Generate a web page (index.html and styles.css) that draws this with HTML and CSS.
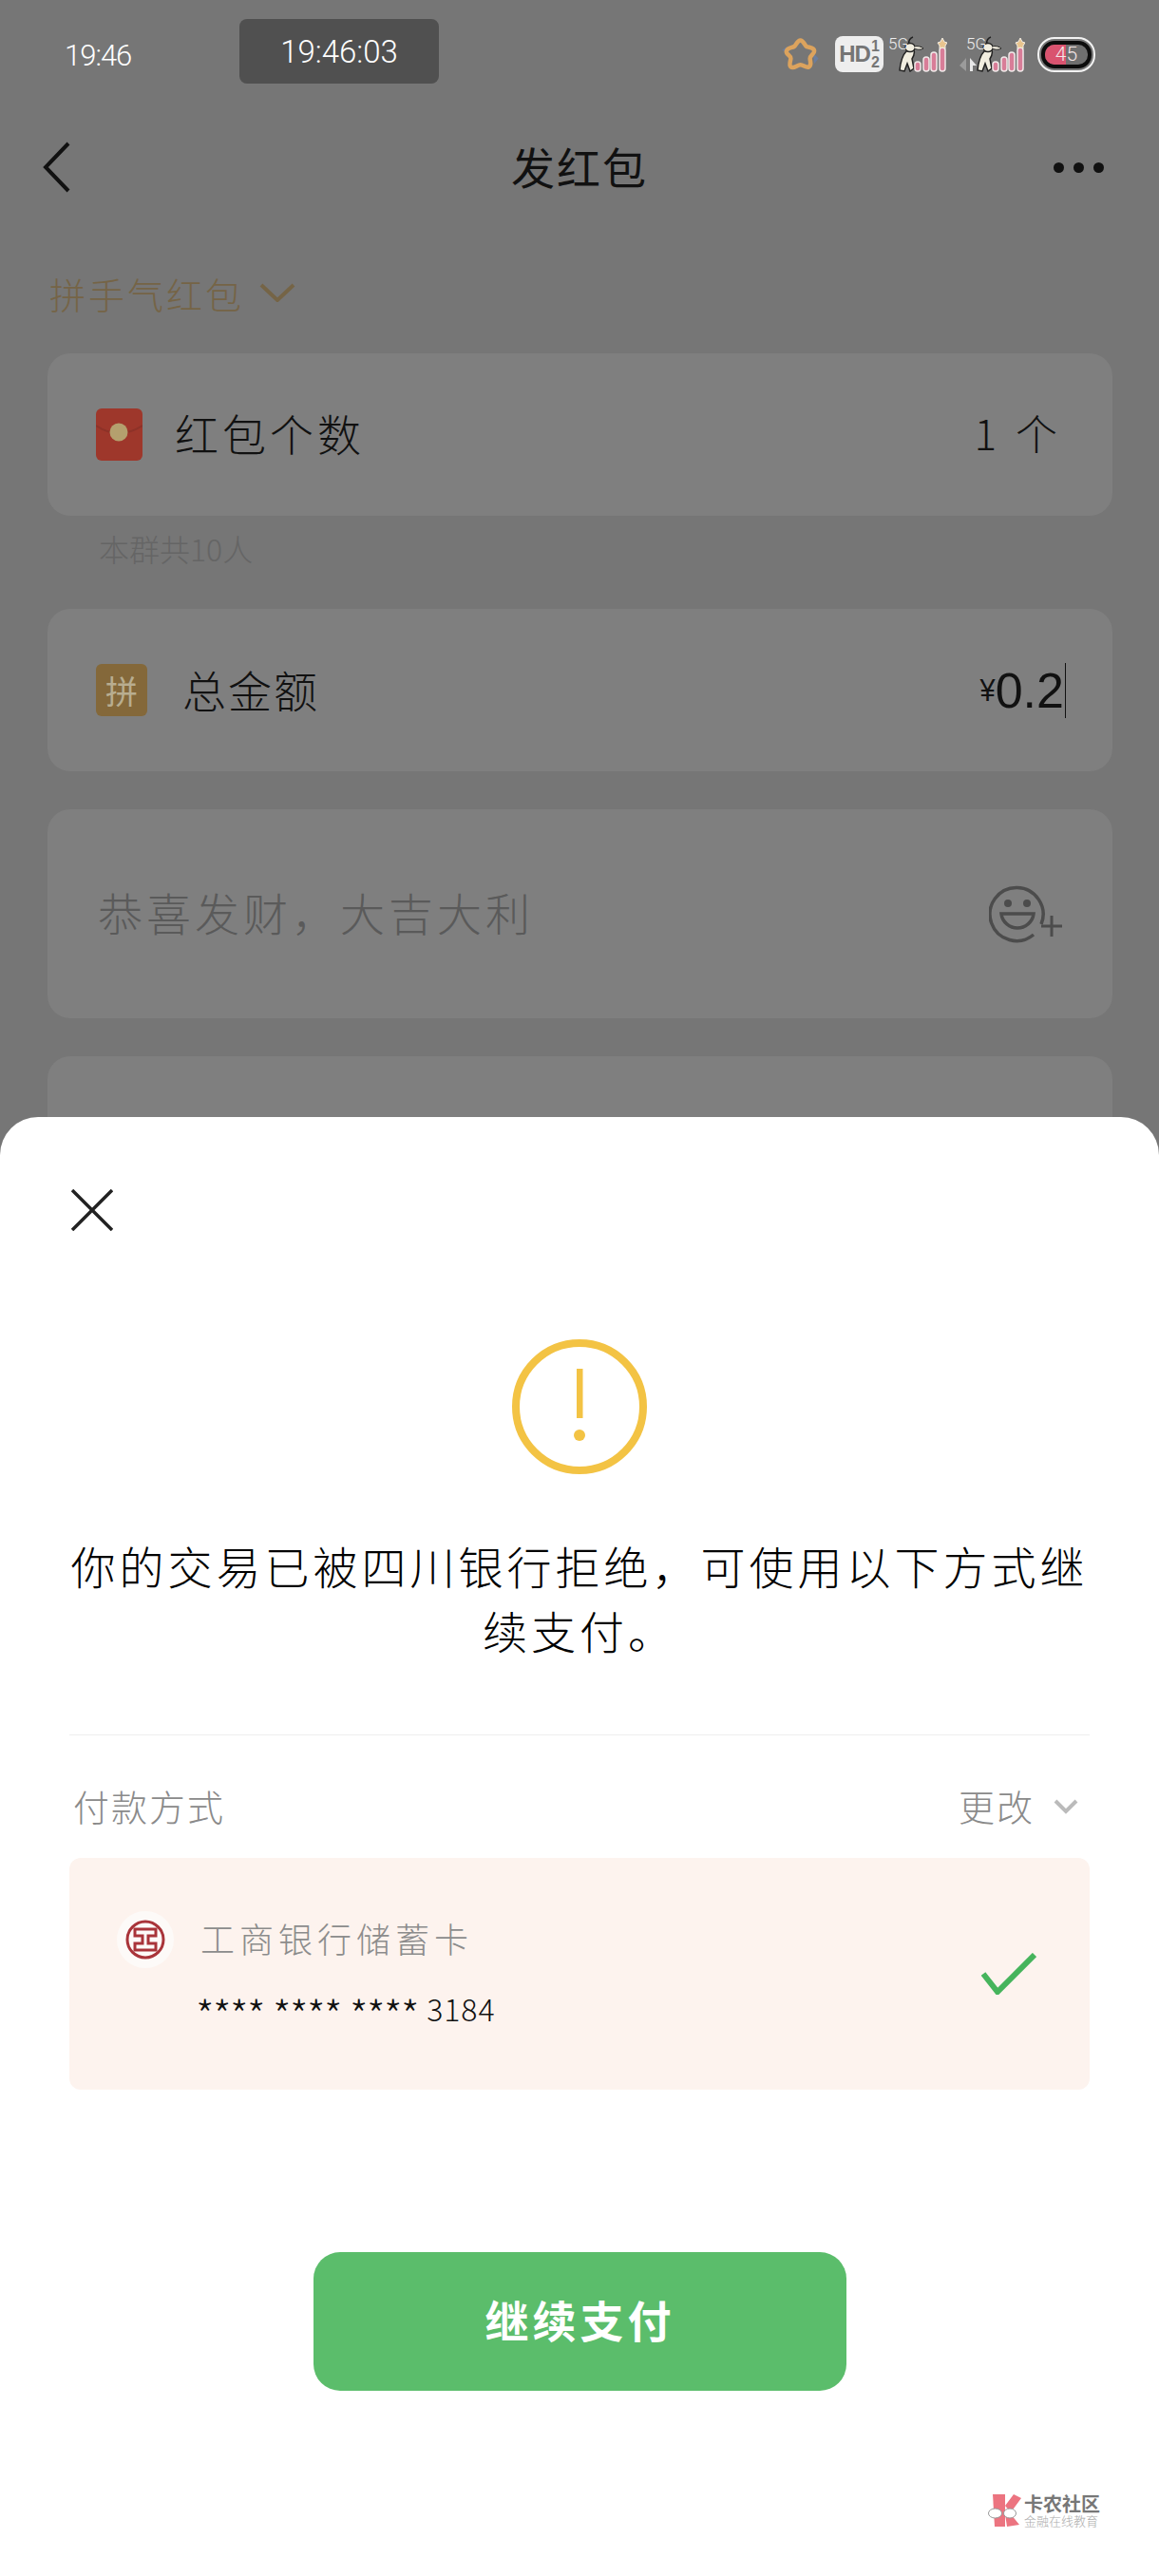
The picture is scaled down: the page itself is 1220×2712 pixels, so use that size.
FILE: index.html
```html
<!DOCTYPE html>
<html lang="zh-CN">

<head>
    <meta charset="UTF-8">
    <meta name="viewport" content="width=device-width, initial-scale=1.0">
    <title>发红包</title>
    <link rel="stylesheet" href="styles.css">
</head>

<body>
    <svg class="defs" width="0" height="0">
        <symbol id="signal" viewBox="0 0 62 38">
            <path d="M19 16 C15 20 13 26 12 36 L17 37 L20 29 L23 37 L27 34 L25 24 C27 21 28 18 27 15 Z" fill="#f2eee0" stroke="#222" stroke-width="1.5" />
            <ellipse cx="23" cy="12" rx="5" ry="4.5" fill="#f2eee0" stroke="#222" stroke-width="1.5" />
            <path d="M22 8 C21 5 23 2 26 1" fill="none" stroke="#222" stroke-width="1.5" />
            <path d="M27 11 C31 10 35 11 37 13 C33 15 30 14 27 13" fill="#f2eee0" stroke="#222" stroke-width="1" />
            <g fill="#d87d98" stroke="#f0e8e8" stroke-width="1.5">
                <rect x="28" y="27" width="6" height="10" rx="3" />
                <rect x="37" y="22" width="6" height="15" rx="3" />
                <rect x="45" y="17" width="6" height="20" rx="3" />
                <rect x="54" y="12" width="6" height="25" rx="3" />
            </g>
            <path d="M57 2 L59 6 L62 7 L60 10 L60 13 L57 12 L54 13 L54 10 L52 7 L55 6 Z" fill="#e8c48e" stroke="#f3eee4" stroke-width="1" />
        </symbol>
    </svg>

    <div class="under">
        <div class="status">
            <span class="time">19:46</span>
            <span class="clock">19:46:03</span>
            <div class="status-icons">
                <svg class="star" width="41" height="36" viewBox="0 0 36 32">
                    <path d="M1 12 L5 9 L5 15 Z M35 20 L30 15 L31 25 Z" fill="#6a7d9e" />
                    <path d="M18 3 C21 3 22 8 24 9 C27 10 31 10 31 13 C31 16 27 17 27 20 C27 23 29 26 26 28 C23 29 21 26 18 26 C15 26 12 30 9 28 C7 26 9 22 9 20 C9 17 4 16 5 13 C6 10 10 10 12 9 C14 8 15 3 18 3 Z" fill="none" stroke="#dca35d" stroke-width="4" />
                </svg>
                <div class="hd">
                    <span>HD</span>
                    <span class="frac"><i>1</i><i>2</i></span>
                </div>
                <div class="sig">
                    <span class="sig-label">5G</span>
                    <svg class="sig-art"><use href="#signal" /></svg>
                </div>
                <div class="sig sig-two">
                    <span class="sig-label">5G</span>
                    <svg class="arrows" width="18" height="14" viewBox="0 0 18 14">
                        <path d="M7 0 L7 14 L0 8 Z" fill="#9b9b9b" />
                        <path d="M11 0 L18 8 L14 8 L14 14 L11 14 Z" fill="#e8e8e8" />
                    </svg>
                    <svg class="sig-art"><use href="#signal" /></svg>
                </div>
                <div class="battery">
                    <div class="battery-in">
                        <div class="battery-fill"></div>
                        <span>45</span>
                    </div>
                </div>
            </div>
        </div>

        <div class="nav">
            <svg width="30" height="54" viewBox="0 0 30 54">
                <path d="M27 2 L3 27 L27 52" fill="none" stroke="#111" stroke-width="4" />
            </svg>
            <h1>发红包</h1>
            <div class="dots"><i></i><i></i><i></i></div>
        </div>

        <div class="type">
            <span>拼手气红包</span>
            <svg width="38" height="20" viewBox="0 0 38 20">
                <path d="M2 2 L19 18 L36 2" fill="none" stroke="#756446" stroke-width="4" />
            </svg>
        </div>

        <div class="card">
            <svg class="packet" width="49" height="55" viewBox="0 0 49 55">
                <rect width="49" height="55" rx="6" fill="#9e372b" />
                <path d="M0 18 Q24 34 49 18" fill="none" stroke="#8d3228" stroke-width="2" />
                <circle cx="24" cy="25" r="9.5" fill="#b4a06e" />
            </svg>
            <span class="label">红包个数</span>
            <span class="value">1<span class="unit">个</span></span>
        </div>
        <p class="hint">本群共10人</p>

        <div class="card card-money">
            <span class="pin">拼</span>
            <span class="label label-money">总金额</span>
            <span class="money"><span class="yen">¥</span>0.2<i class="caret"></i></span>
        </div>

        <div class="card card-msg">
            <span class="placeholder">恭喜发财，大吉大利</span>
            <svg width="78" height="66" viewBox="0 0 78 66">
                <path d="M55 44 A28 28 0 1 0 47 55" fill="none" stroke="#4c4c4c" stroke-width="3.5" />
                <circle cx="20" cy="22" r="4" fill="#4c4c4c" />
                <circle cx="40" cy="22" r="4" fill="#4c4c4c" />
                <path d="M13 33 L47 33 C46 42 38 48 30 48 C22 48 14 42 13 33 Z" fill="none" stroke="#4c4c4c" stroke-width="3.5" />
                <path d="M55 46 L77 46 M66 35 L66 57" fill="none" stroke="#4c4c4c" stroke-width="3" />
            </svg>
        </div>

        <div class="card card-cut"></div>
    </div>

    <div class="sheet">
        <svg class="close" width="44" height="44" viewBox="0 0 44 44">
            <path d="M1 1 L43 43 M43 1 L1 43" fill="none" stroke="#222" stroke-width="3.5" />
        </svg>

        <svg class="warn" width="144" height="144" viewBox="0 0 144 144">
            <circle cx="72" cy="72" r="67" fill="none" stroke="#f3c344" stroke-width="8" />
            <rect x="69" y="32" width="6.5" height="52" fill="#f3c344" />
            <circle cx="72" cy="102" r="6" fill="#f3c344" />
        </svg>

        <p class="msg">你的交易已被四川银行拒绝，可使用以下方式继续支付。</p>

        <div class="pay">
            <div class="pay-head">
                <span>付款方式</span>
                <div class="change">
                    <span>更改</span>
                    <svg width="26" height="16" viewBox="0 0 26 16">
                        <path d="M2 2 L13 13 L24 2" fill="none" stroke="#bbb" stroke-width="4" />
                    </svg>
                </div>
            </div>

            <div class="bank-card">
                <div class="bank-info">
                    <div class="bank-row">
                        <svg class="bank-logo" width="60" height="60" viewBox="0 0 60 60">
                            <circle cx="30" cy="30" r="30" fill="#fdfaf8" />
                            <circle cx="30" cy="30" r="19" fill="none" stroke="#a9343a" stroke-width="3" />
                            <path d="M19 19 H41 V26 H33 V34 H41 V41 H19 V34 H27 V26 H19 Z" fill="none" stroke="#a9343a" stroke-width="3" />
                        </svg>
                        <span class="bank-name">工商银行储蓄卡</span>
                    </div>
                    <div class="bank-num"><span class="stars">****</span> <span class="stars">****</span> <span class="stars">****</span> 3184</div>
                </div>
                <svg class="bank-check" width="58" height="44" viewBox="0 0 58 44">
                    <path d="M2 22 L17 41 L56 2" fill="none" stroke="#46b45c" stroke-width="6" />
                </svg>
            </div>
        </div>

        <button class="go" type="button">继续支付</button>

        <div class="mark">
            <svg width="36" height="36" viewBox="0 0 36 36">
                <path d="M5 1 H18 V35 H7 Z" fill="#ec7480" />
                <path d="M18 13 L27 1 L35 5 L24 20 Z M18 22 L24 22 L33 33 L20 35 Z" fill="#ec7480" />
                <ellipse cx="7.5" cy="21" rx="7" ry="5" fill="#fff" stroke="#999" stroke-width="1" />
                <ellipse cx="23" cy="21" rx="6.5" ry="5" fill="#fff" stroke="#999" stroke-width="1" />
            </svg>
            <div class="mark-text">
                <strong>卡农社区</strong>
                <small>金融在线教育</small>
            </div>
        </div>
    </div>
</body>

</html>
```

FILE: styles.css
```css
* {
    box-sizing: border-box;
}

body {
    margin: 0;
    width: 1220px;
    background: #767676;
    font-family: "Noto Sans CJK SC", "Noto Sans", sans-serif;
    font-weight: 300;
    color: #111;
}

.defs {
    display: block;
}

.under {
    height: 1176px;
    padding-top: 20px;
    overflow: hidden;
}

.status {
    display: flex;
    align-items: center;
    height: 68px;
    padding-left: 68px;
    color: #fff;
    font-family: Roboto, sans-serif;
    font-weight: 300;
}

.time {
    width: 184px;
    font-size: 31px;
    letter-spacing: -1px;
    padding-top: 8px;
}

.clock {
    display: flex;
    align-items: center;
    justify-content: center;
    width: 210px;
    height: 68px;
    background: #505050;
    border-radius: 8px;
    font-size: 33px;
}

.status-icons {
    display: flex;
    align-items: center;
    margin-left: 360px;
    padding-top: 6px;
}

.star {
    margin-right: 16px;
}

.hd {
    display: flex;
    align-items: center;
    justify-content: center;
    gap: 1px;
    width: 51px;
    height: 38px;
    background: #eee;
    border-radius: 8px;
    color: #757575;
    font-family: "Liberation Sans", sans-serif;
    font-size: 24px;
    font-weight: bold;
    letter-spacing: -1px;
}

.frac {
    display: flex;
    flex-direction: column;
    font-size: 16px;
    line-height: 17px;
    letter-spacing: 0;
}

.frac i {
    font-style: normal;
}

.sig {
    position: relative;
    width: 62px;
    height: 38px;
    margin-left: 5px;
}

.sig-art {
    display: block;
    width: 62px;
    height: 38px;
}

.sig-label {
    position: absolute;
    left: 0;
    top: -1px;
    font-size: 17px;
    line-height: 18px;
    color: #eee;
}

.sig-two {
    margin-left: 20px;
}

.arrows {
    position: absolute;
    left: -7px;
    bottom: 1px;
}

.battery {
    width: 61px;
    height: 37px;
    margin-left: 13px;
    padding: 2px;
    border: 2px solid #f2f2f2;
    border-radius: 18px;
}

.battery-in {
    position: relative;
    display: flex;
    align-items: center;
    justify-content: center;
    height: 100%;
    border: 4px solid #0c0c0c;
    border-radius: 14px;
    background: #6f6f6f;
    overflow: hidden;
}

.battery-fill {
    position: absolute;
    left: 0;
    top: 0;
    bottom: 0;
    width: 48%;
    background: #d9536f;
}

.battery-in span {
    position: relative;
    font-size: 21px;
    color: #f3e6e6;
}

.nav {
    display: grid;
    grid-template-columns: 1fr auto 1fr;
    align-items: center;
    height: 92px;
    margin-top: 42px;
    padding: 0 45px;
}

.nav h1 {
    margin: 0 0 4px;
    font-size: 46px;
    font-weight: 400;
    letter-spacing: 2px;
}

.dots {
    display: flex;
    justify-content: flex-end;
    gap: 10px;
    margin-right: 13px;
}

.dots i {
    width: 11px;
    height: 11px;
    border-radius: 50%;
    background: #111;
}

.type {
    display: flex;
    align-items: center;
    gap: 16px;
    height: 44px;
    margin: 64px 0 42px;
    padding-left: 52px;
    color: #756446;
    font-size: 38px;
    letter-spacing: 3px;
}

.card {
    display: flex;
    align-items: center;
    height: 171px;
    margin: 38px 49px 0 50px;
    padding: 0 58px 0 51px;
    background: #7f7f7f;
    border-radius: 24px;
}

.label {
    margin: 0 0 6px 34px;
    font-size: 46px;
    letter-spacing: 4px;
}

.value {
    margin: 0 0 6px auto;
    font-size: 44px;
}

.unit {
    margin-left: 20px;
}

.hint {
    height: 72px;
    margin: 0 0 26px;
    padding-left: 104px;
    color: #656565;
    font-size: 32px;
    line-height: 68px;
}

.card-money {
    margin-top: 0;
    padding-right: 49px;
}

.pin {
    display: flex;
    align-items: center;
    justify-content: center;
    width: 54px;
    height: 55px;
    background: #84683a;
    border-radius: 6px;
    color: #b8ad90;
    font-size: 34px;
    font-weight: 400;
}

.label-money {
    margin: 0 0 4px 37px;
    letter-spacing: 2px;
}

.money {
    display: flex;
    align-items: center;
    margin-left: auto;
    font-family: "Liberation Sans", sans-serif;
    font-size: 52px;
    font-weight: 400;
}

.yen {
    margin-right: -1px;
    font-size: 34px;
    font-weight: 400;
    transform: scaleX(0.85);
}

.caret {
    width: 1px;
    height: 58px;
    margin-left: 1px;
    background: #111;
}

.card-msg {
    justify-content: space-between;
    height: 220px;
    margin-top: 40px;
    padding: 0 52px 0 53px;
}

.placeholder {
    margin-bottom: 6px;
    color: #5a5a5a;
    font-size: 47px;
    letter-spacing: 4px;
}

.card-cut {
    height: 100px;
    margin-top: 40px;
}

.sheet {
    height: 1536px;
    padding-top: 76px;
    background: #fff;
    border-radius: 40px 40px 0 0;
}

.close {
    display: block;
    margin-left: 75px;
}

.warn {
    display: block;
    margin: 113px auto 0;
}

.msg {
    width: 1074px;
    margin: 61px auto 0;
    font-size: 47px;
    letter-spacing: 4px;
    line-height: 68px;
    text-align: center;
    color: #000;
}

.pay {
    margin: 76px 73px 0;
    padding-top: 46px;
    border-top: 1px solid #eee;
}

.pay-head {
    display: flex;
    align-items: center;
    justify-content: space-between;
    height: 60px;
    margin-bottom: 23px;
    padding: 0 12px 6px 4px;
    color: #8a8a8a;
    font-size: 38px;
    letter-spacing: 2px;
}

.change {
    display: flex;
    align-items: center;
    gap: 20px;
}

.change svg {
    margin-top: 4px;
}

.bank-card {
    display: flex;
    align-items: center;
    justify-content: space-between;
    height: 244px;
    padding: 0 56px 4px 50px;
    background: #fdf3ee;
    border-radius: 12px;
}

.bank-check {
    margin-top: 4px;
}

.bank-row {
    display: flex;
    align-items: center;
    gap: 28px;
}

.bank-logo {
    display: block;
}

.bank-name {
    margin-bottom: 4px;
    color: #8c8c8c;
    font-size: 36px;
    letter-spacing: 5px;
}

.bank-num {
    margin: 22px 0 0 83px;
    font-size: 32px;
    line-height: 40px;
    letter-spacing: 1px;
    word-spacing: 1px;
    color: #111;
}

.stars {
    font-size: 44px;
    line-height: 40px;
    letter-spacing: -1.5px;
    vertical-align: -11px;
}

.go {
    display: block;
    width: 561px;
    height: 146px;
    margin: 171px 0 0 330px;
    padding-bottom: 8px;
    border: none;
    border-radius: 28px;
    background: #5bbd6b;
    color: #fff;
    font-family: inherit;
    font-size: 46px;
    font-weight: bold;
    letter-spacing: 4px;
}

.mark {
    display: flex;
    justify-content: flex-end;
    gap: 2px;
    margin-top: 108px;
    padding-right: 62px;
}

.mark-text {
    display: flex;
    flex-direction: column;
    width: 80px;
}

.mark-text strong {
    color: #777;
    font-size: 20px;
    font-weight: 700;
    line-height: 22px;
}

.mark-text small {
    color: #aaa;
    font-size: 13px;
    line-height: 14px;
}
```
